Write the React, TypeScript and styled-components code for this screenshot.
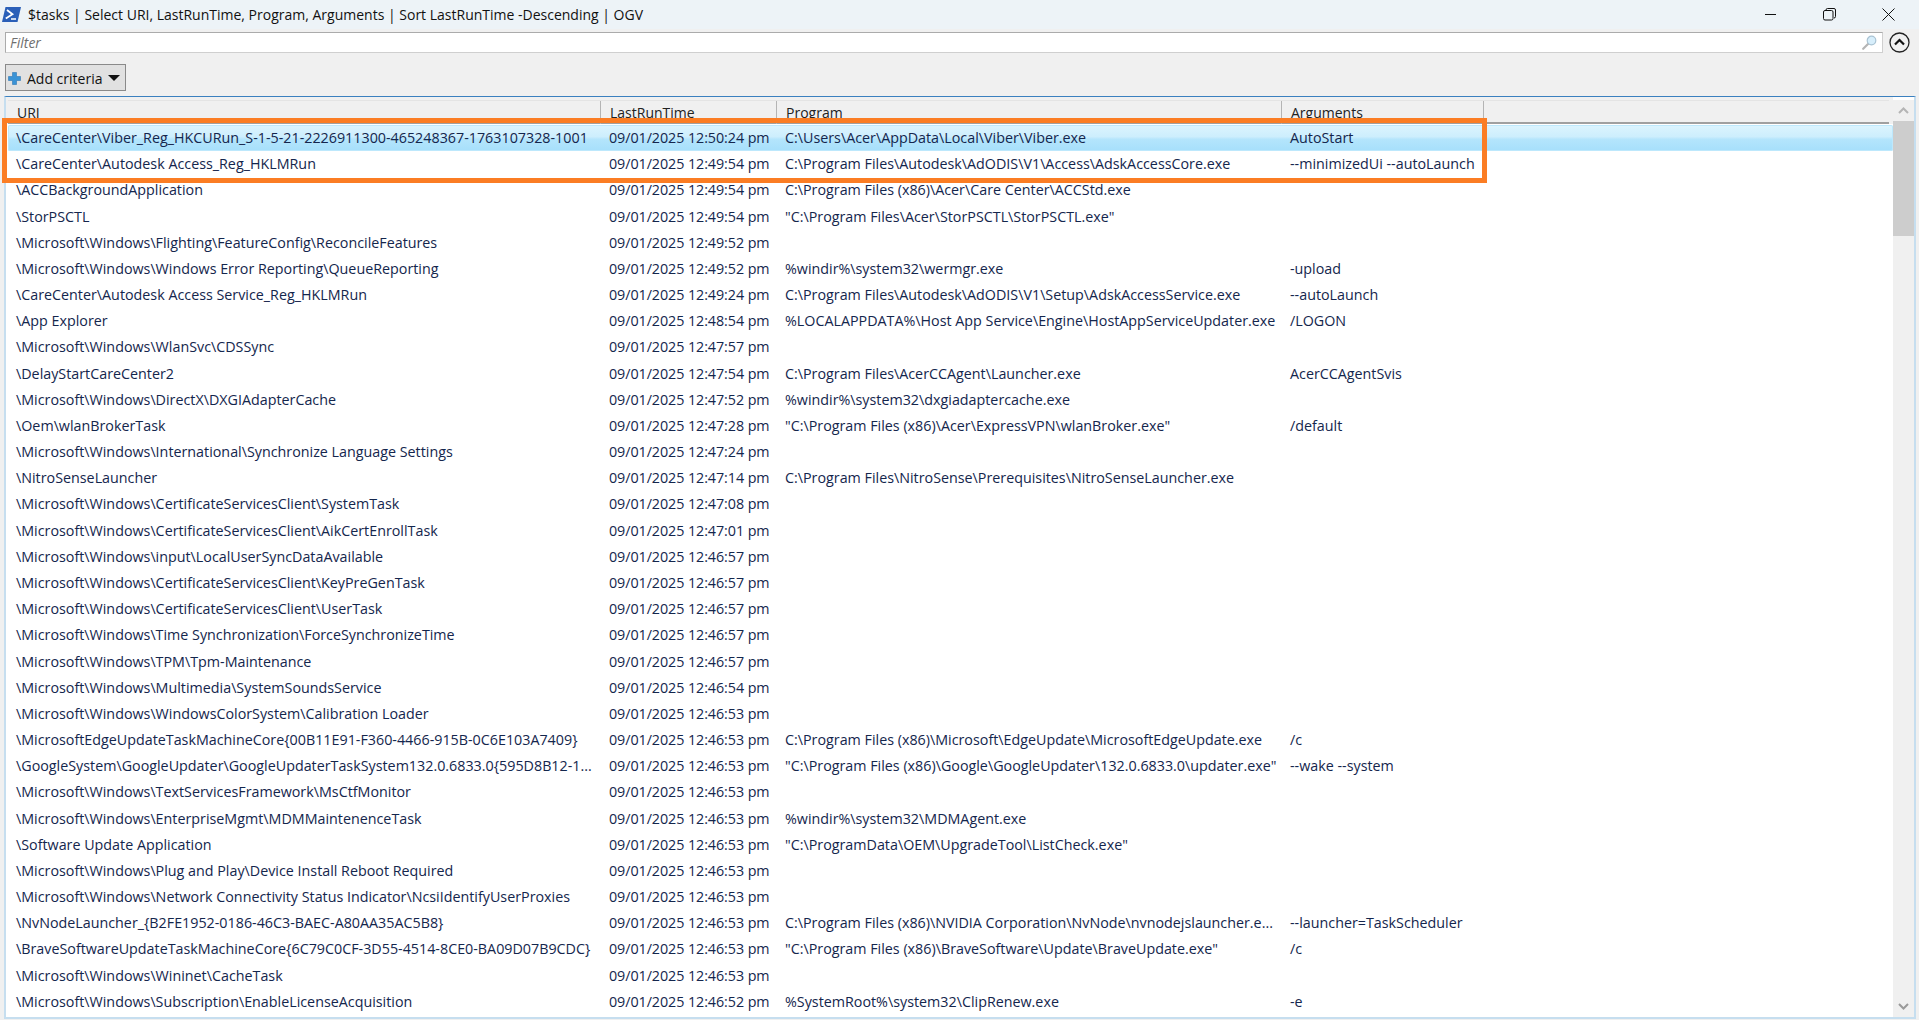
import React from 'react';
import styled, { createGlobalStyle } from 'styled-components';

const Global = createGlobalStyle`
  html, body { margin: 0; padding: 0; background: #f0f0f0; overflow: hidden; }
  body { font-family: "Open Sans", "Noto Sans", "Liberation Sans", sans-serif; }
`;

const Win = styled.div`
  position: relative;
  width: 1919px;
  height: 1020px;
  display: flex;
  flex-direction: column;
  background: #f0f0f0;
  overflow: hidden;
`;
const TitleBar = styled.div`
  height: 29px;
  flex: none;
  display: flex;
  align-items: center;
  background: #edf3f7;
  padding-left: 2px;
  color: #111;
  font-size: 14px;
`;
const TitleText = styled.span`
  margin-left: 7px;
  flex: 1;
  white-space: nowrap;
`;
const WinControls = styled.div`
  display: flex;
  align-items: center;
  gap: 46px;
  margin-right: 24px;
`;
const FilterRow = styled.div`
  display: flex;
  align-items: center;
  height: 21px;
  margin-top: 3px;
  padding-left: 5px;
  flex: none;
`;
const FilterBox = styled.div`
  width: 1878px;
  height: 21px;
  box-sizing: border-box;
  display: flex;
  align-items: center;
  justify-content: space-between;
  background: #fff;
  border: 1px solid #ababab;
  border-bottom-color: #cfcfcf;
  border-right-color: #cfcfcf;
  padding: 0 5px 0 4px;
  font-style: italic;
  font-size: 14px;
  color: #6f6f6f;
`;
const CollapseIcon = styled.svg`
  margin-left: 6px;
`;
const ButtonRow = styled.div`
  flex: none;
  margin-top: 11px;
  padding-left: 5px;
  display: flex;
`;
const CriteriaButton = styled.div`
  width: 121px;
  height: 27px;
  box-sizing: border-box;
  display: flex;
  align-items: center;
  background: #e1e1e1;
  border: 1px solid #8a8a8a;
  padding: 1px 0 0 2px;
  font-size: 14px;
  color: #111;
`;
const CriteriaLabel = styled.span`
  margin-left: 6px;
  white-space: nowrap;
`;
const Caret = styled.span`
  margin-left: 6px;
  width: 0;
  height: 0;
  border-left: 6px solid transparent;
  border-right: 6px solid transparent;
  border-top: 6px solid #111;
`;
const Frame = styled.div`
  flex: 1;
  margin: 5px 3px 1px 4px;
  min-height: 0;
  box-sizing: border-box;
  display: flex;
  background: #fff;
  border-top: 1px solid #3b80bf;
  border-left: 2px solid #c6deef;
  border-right: 2px solid #c6deef;
  border-bottom: 2px solid #c6deef;
`;
const ListPane = styled.div`
  flex: 1;
  min-width: 0;
  display: flex;
  flex-direction: column;
  background: #fff;
`;
const HeaderStrip = styled.div`
  flex: none;
  height: 27px;
  padding: 3px 2px 0 2px;
  box-sizing: border-box;
  background: #f0f0f0;
`;
const Header = styled.div`
  height: 24px;
  box-sizing: border-box;
  display: grid;
  grid-template-columns: 593px 176px 505px 202px 1fr;
  background: #f0f0f0;
  border-top: 1px solid #e4e4e4;
  border-bottom: 2px solid #a0a0a0;
  margin-right: 2px;
`;
const HeadCell = styled.div`
  padding-left: 9px;
  font-size: 14px;
  line-height: 23px;
  color: #222;
  border-right: 1px solid #b4b4b4;
  white-space: nowrap;
  &:last-child { border-right: none; }
`;
const Rows = styled.div`
  flex: 1;
  padding-top: 1px;
  margin-left: 2px;
`;
const Row = styled.div<{ $selected?: boolean }>`
  height: 26.18px;
  box-sizing: border-box;
  display: grid;
  grid-template-columns: 593px 176px 505px 218px 1fr;
  align-items: center;
  border-radius: 2px;
  ${p => p.$selected && `
    background: linear-gradient(#dcf4fe 0%, #cdeefd 45%, #b4e5fc 55%, #a6dffb 100%);
    box-shadow: inset 0 0 0 1px #bde8fc;
  `}
`;
const Cell = styled.div`
  padding-left: 8px;
  font-size: 14.3px;
  line-height: 20px;
  color: #14264d;
  white-space: nowrap;
  overflow: hidden;
`;
const TimeCell = styled(Cell)`
  letter-spacing: -0.06px;
`;
const ScrollBar = styled.div`
  width: 21px;
  flex: none;
  display: flex;
  flex-direction: column;
  margin-top: 3px;
  background: #f0f0f0;
`;
const ScrollBtn = styled.div`
  height: 21px;
  flex: none;
  display: flex;
  align-items: center;
  justify-content: center;
`;
const ScrollThumb = styled.div`
  height: 115px;
  flex: none;
  background: #cdcdcd;
`;
const ScrollTrack = styled.div`
  flex: 1;
`;
const Highlight = styled.div`
  position: absolute;
  left: 2px;
  top: 118px;
  width: 1485px;
  height: 65px;
  box-sizing: border-box;
  border: 5px solid #fb7d24;
  pointer-events: none;
`;

const rows: [string, string, string, string][] = [
  ['\\CareCenter\\Viber_Reg_HKCURun_S-1-5-21-2226911300-465248367-1763107328-1001', '09/01/2025 12:50:24 pm', 'C:\\Users\\Acer\\AppData\\Local\\Viber\\Viber.exe', 'AutoStart'],
  ['\\CareCenter\\Autodesk Access_Reg_HKLMRun', '09/01/2025 12:49:54 pm', 'C:\\Program Files\\Autodesk\\AdODIS\\V1\\Access\\AdskAccessCore.exe', '--minimizedUi --autoLaunch'],
  ['\\ACCBackgroundApplication', '09/01/2025 12:49:54 pm', 'C:\\Program Files (x86)\\Acer\\Care Center\\ACCStd.exe', ''],
  ['\\StorPSCTL', '09/01/2025 12:49:54 pm', '"C:\\Program Files\\Acer\\StorPSCTL\\StorPSCTL.exe"', ''],
  ['\\Microsoft\\Windows\\Flighting\\FeatureConfig\\ReconcileFeatures', '09/01/2025 12:49:52 pm', '', ''],
  ['\\Microsoft\\Windows\\Windows Error Reporting\\QueueReporting', '09/01/2025 12:49:52 pm', '%windir%\\system32\\wermgr.exe', '-upload'],
  ['\\CareCenter\\Autodesk Access Service_Reg_HKLMRun', '09/01/2025 12:49:24 pm', 'C:\\Program Files\\Autodesk\\AdODIS\\V1\\Setup\\AdskAccessService.exe', '--autoLaunch'],
  ['\\App Explorer', '09/01/2025 12:48:54 pm', '%LOCALAPPDATA%\\Host App Service\\Engine\\HostAppServiceUpdater.exe', '/LOGON'],
  ['\\Microsoft\\Windows\\WlanSvc\\CDSSync', '09/01/2025 12:47:57 pm', '', ''],
  ['\\DelayStartCareCenter2', '09/01/2025 12:47:54 pm', 'C:\\Program Files\\AcerCCAgent\\Launcher.exe', 'AcerCCAgentSvis'],
  ['\\Microsoft\\Windows\\DirectX\\DXGIAdapterCache', '09/01/2025 12:47:52 pm', '%windir%\\system32\\dxgiadaptercache.exe', ''],
  ['\\Oem\\wlanBrokerTask', '09/01/2025 12:47:28 pm', '"C:\\Program Files (x86)\\Acer\\ExpressVPN\\wlanBroker.exe"', '/default'],
  ['\\Microsoft\\Windows\\International\\Synchronize Language Settings', '09/01/2025 12:47:24 pm', '', ''],
  ['\\NitroSenseLauncher', '09/01/2025 12:47:14 pm', 'C:\\Program Files\\NitroSense\\Prerequisites\\NitroSenseLauncher.exe', ''],
  ['\\Microsoft\\Windows\\CertificateServicesClient\\SystemTask', '09/01/2025 12:47:08 pm', '', ''],
  ['\\Microsoft\\Windows\\CertificateServicesClient\\AikCertEnrollTask', '09/01/2025 12:47:01 pm', '', ''],
  ['\\Microsoft\\Windows\\input\\LocalUserSyncDataAvailable', '09/01/2025 12:46:57 pm', '', ''],
  ['\\Microsoft\\Windows\\CertificateServicesClient\\KeyPreGenTask', '09/01/2025 12:46:57 pm', '', ''],
  ['\\Microsoft\\Windows\\CertificateServicesClient\\UserTask', '09/01/2025 12:46:57 pm', '', ''],
  ['\\Microsoft\\Windows\\Time Synchronization\\ForceSynchronizeTime', '09/01/2025 12:46:57 pm', '', ''],
  ['\\Microsoft\\Windows\\TPM\\Tpm-Maintenance', '09/01/2025 12:46:57 pm', '', ''],
  ['\\Microsoft\\Windows\\Multimedia\\SystemSoundsService', '09/01/2025 12:46:54 pm', '', ''],
  ['\\Microsoft\\Windows\\WindowsColorSystem\\Calibration Loader', '09/01/2025 12:46:53 pm', '', ''],
  ['\\MicrosoftEdgeUpdateTaskMachineCore{00B11E91-F360-4466-915B-0C6E103A7409}', '09/01/2025 12:46:53 pm', 'C:\\Program Files (x86)\\Microsoft\\EdgeUpdate\\MicrosoftEdgeUpdate.exe', '/c'],
  ['\\GoogleSystem\\GoogleUpdater\\GoogleUpdaterTaskSystem132.0.6833.0{595D8B12-1...', '09/01/2025 12:46:53 pm', '"C:\\Program Files (x86)\\Google\\GoogleUpdater\\132.0.6833.0\\updater.exe"', '--wake --system'],
  ['\\Microsoft\\Windows\\TextServicesFramework\\MsCtfMonitor', '09/01/2025 12:46:53 pm', '', ''],
  ['\\Microsoft\\Windows\\EnterpriseMgmt\\MDMMaintenenceTask', '09/01/2025 12:46:53 pm', '%windir%\\system32\\MDMAgent.exe', ''],
  ['\\Software Update Application', '09/01/2025 12:46:53 pm', '"C:\\ProgramData\\OEM\\UpgradeTool\\ListCheck.exe"', ''],
  ['\\Microsoft\\Windows\\Plug and Play\\Device Install Reboot Required', '09/01/2025 12:46:53 pm', '', ''],
  ['\\Microsoft\\Windows\\Network Connectivity Status Indicator\\NcsiIdentifyUserProxies', '09/01/2025 12:46:53 pm', '', ''],
  ['\\NvNodeLauncher_{B2FE1952-0186-46C3-BAEC-A80AA35AC5B8}', '09/01/2025 12:46:53 pm', 'C:\\Program Files (x86)\\NVIDIA Corporation\\NvNode\\nvnodejslauncher.e...', '--launcher=TaskScheduler'],
  ['\\BraveSoftwareUpdateTaskMachineCore{6C79C0CF-3D55-4514-8CE0-BA09D07B9CDC}', '09/01/2025 12:46:53 pm', '"C:\\Program Files (x86)\\BraveSoftware\\Update\\BraveUpdate.exe"', '/c'],
  ['\\Microsoft\\Windows\\Wininet\\CacheTask', '09/01/2025 12:46:53 pm', '', ''],
  ['\\Microsoft\\Windows\\Subscription\\EnableLicenseAcquisition', '09/01/2025 12:46:52 pm', '%SystemRoot%\\system32\\ClipRenew.exe', '-e'],
];

const PsIcon = () => (
  <svg width="19" height="15" viewBox="0 0 19 15">
    <path d="M3.5 0H19L15.5 15H0Z" fill="#2a5fb8" />
    <path d="M5 3L10.5 7.2L3.8 11.6" fill="none" stroke="#fff" strokeWidth="1.8" />
    <path d="M9 12H14" stroke="#fff" strokeWidth="1.5" />
  </svg>
);
const MinIcon = () => (
  <svg width="13" height="13" viewBox="0 0 13 13"><path d="M1 6.5H12" stroke="#111" strokeWidth="1" /></svg>
);
const MaxIcon = () => (
  <svg width="13" height="13" viewBox="0 0 13 13">
    <rect x="0.5" y="2.5" width="9.5" height="9.5" rx="1.5" fill="none" stroke="#111" />
    <path d="M3 2.5V2A1.5 1.5 0 0 1 4.5 0.5H11A1.5 1.5 0 0 1 12.5 2V8.5A1.5 1.5 0 0 1 11 10" fill="none" stroke="#111" />
  </svg>
);
const CloseIcon = () => (
  <svg width="13" height="13" viewBox="0 0 13 13"><path d="M0.5 0.5L12.5 12.5M12.5 0.5L0.5 12.5" stroke="#111" strokeWidth="1" /></svg>
);
const Magnifier = () => (
  <svg width="15" height="15" viewBox="0 0 15 15">
    <path d="M1.2 13.8L6 9" stroke="#b5b5b5" strokeWidth="2.2" strokeLinecap="round" />
    <circle cx="9.5" cy="5.5" r="4.3" fill="#d7eefb" stroke="#a9c3d3" strokeWidth="1.2" />
  </svg>
);
const PlusIcon = () => (
  <svg width="13" height="13" viewBox="0 0 13 13">
    <path d="M4.5 0.5H8.5V4.5H12.5V8.5H8.5V12.5H4.5V8.5H0.5V4.5H4.5Z" fill="#3a93d6" stroke="#2e77b5" strokeWidth="0.6" />
  </svg>
);
const ArrowUp = () => (
  <svg width="11" height="7" viewBox="0 0 11 7"><path d="M1 6L5.5 1.5L10 6" fill="none" stroke="#b5b5b5" strokeWidth="2" /></svg>
);
const ArrowDown = () => (
  <svg width="11" height="7" viewBox="0 0 11 7"><path d="M1 1L5.5 5.5L10 1" fill="none" stroke="#9a9a9a" strokeWidth="2" /></svg>
);

export default function App() {
  return (
    <Win>
      <Global />
      <TitleBar>
        <PsIcon />
        <TitleText>$tasks | Select URI, LastRunTime, Program, Arguments | Sort LastRunTime -Descending | OGV</TitleText>
        <WinControls>
          <MinIcon />
          <MaxIcon />
          <CloseIcon />
        </WinControls>
      </TitleBar>
      <FilterRow>
        <FilterBox>
          <span>Filter</span>
          <Magnifier />
        </FilterBox>
        <CollapseIcon width="21" height="21" viewBox="0 0 21 21">
          <circle cx="10.5" cy="10.5" r="9.5" fill="none" stroke="#222" strokeWidth="1.3" />
          <path d="M6 12.5L10.5 8L15 12.5" fill="none" stroke="#111" strokeWidth="2.2" />
        </CollapseIcon>
      </FilterRow>
      <ButtonRow>
        <CriteriaButton>
          <PlusIcon />
          <CriteriaLabel>Add criteria</CriteriaLabel>
          <Caret />
        </CriteriaButton>
      </ButtonRow>
      <Frame>
        <ListPane>
          <HeaderStrip>
            <Header>
              <HeadCell>URI</HeadCell>
              <HeadCell>LastRunTime</HeadCell>
              <HeadCell>Program</HeadCell>
              <HeadCell>Arguments</HeadCell>
              <HeadCell />
            </Header>
          </HeaderStrip>
          <Rows>
            {rows.map((r, i) => (
              <Row key={i} $selected={i === 0}>
                <Cell>{r[0]}</Cell>
                <TimeCell>{r[1]}</TimeCell>
                <Cell>{r[2]}</Cell>
                <Cell>{r[3]}</Cell>
              </Row>
            ))}
          </Rows>
        </ListPane>
        <ScrollBar>
          <ScrollBtn><ArrowUp /></ScrollBtn>
          <ScrollThumb />
          <ScrollTrack />
          <ScrollBtn><ArrowDown /></ScrollBtn>
        </ScrollBar>
      </Frame>
      <Highlight />
    </Win>
  );
}
